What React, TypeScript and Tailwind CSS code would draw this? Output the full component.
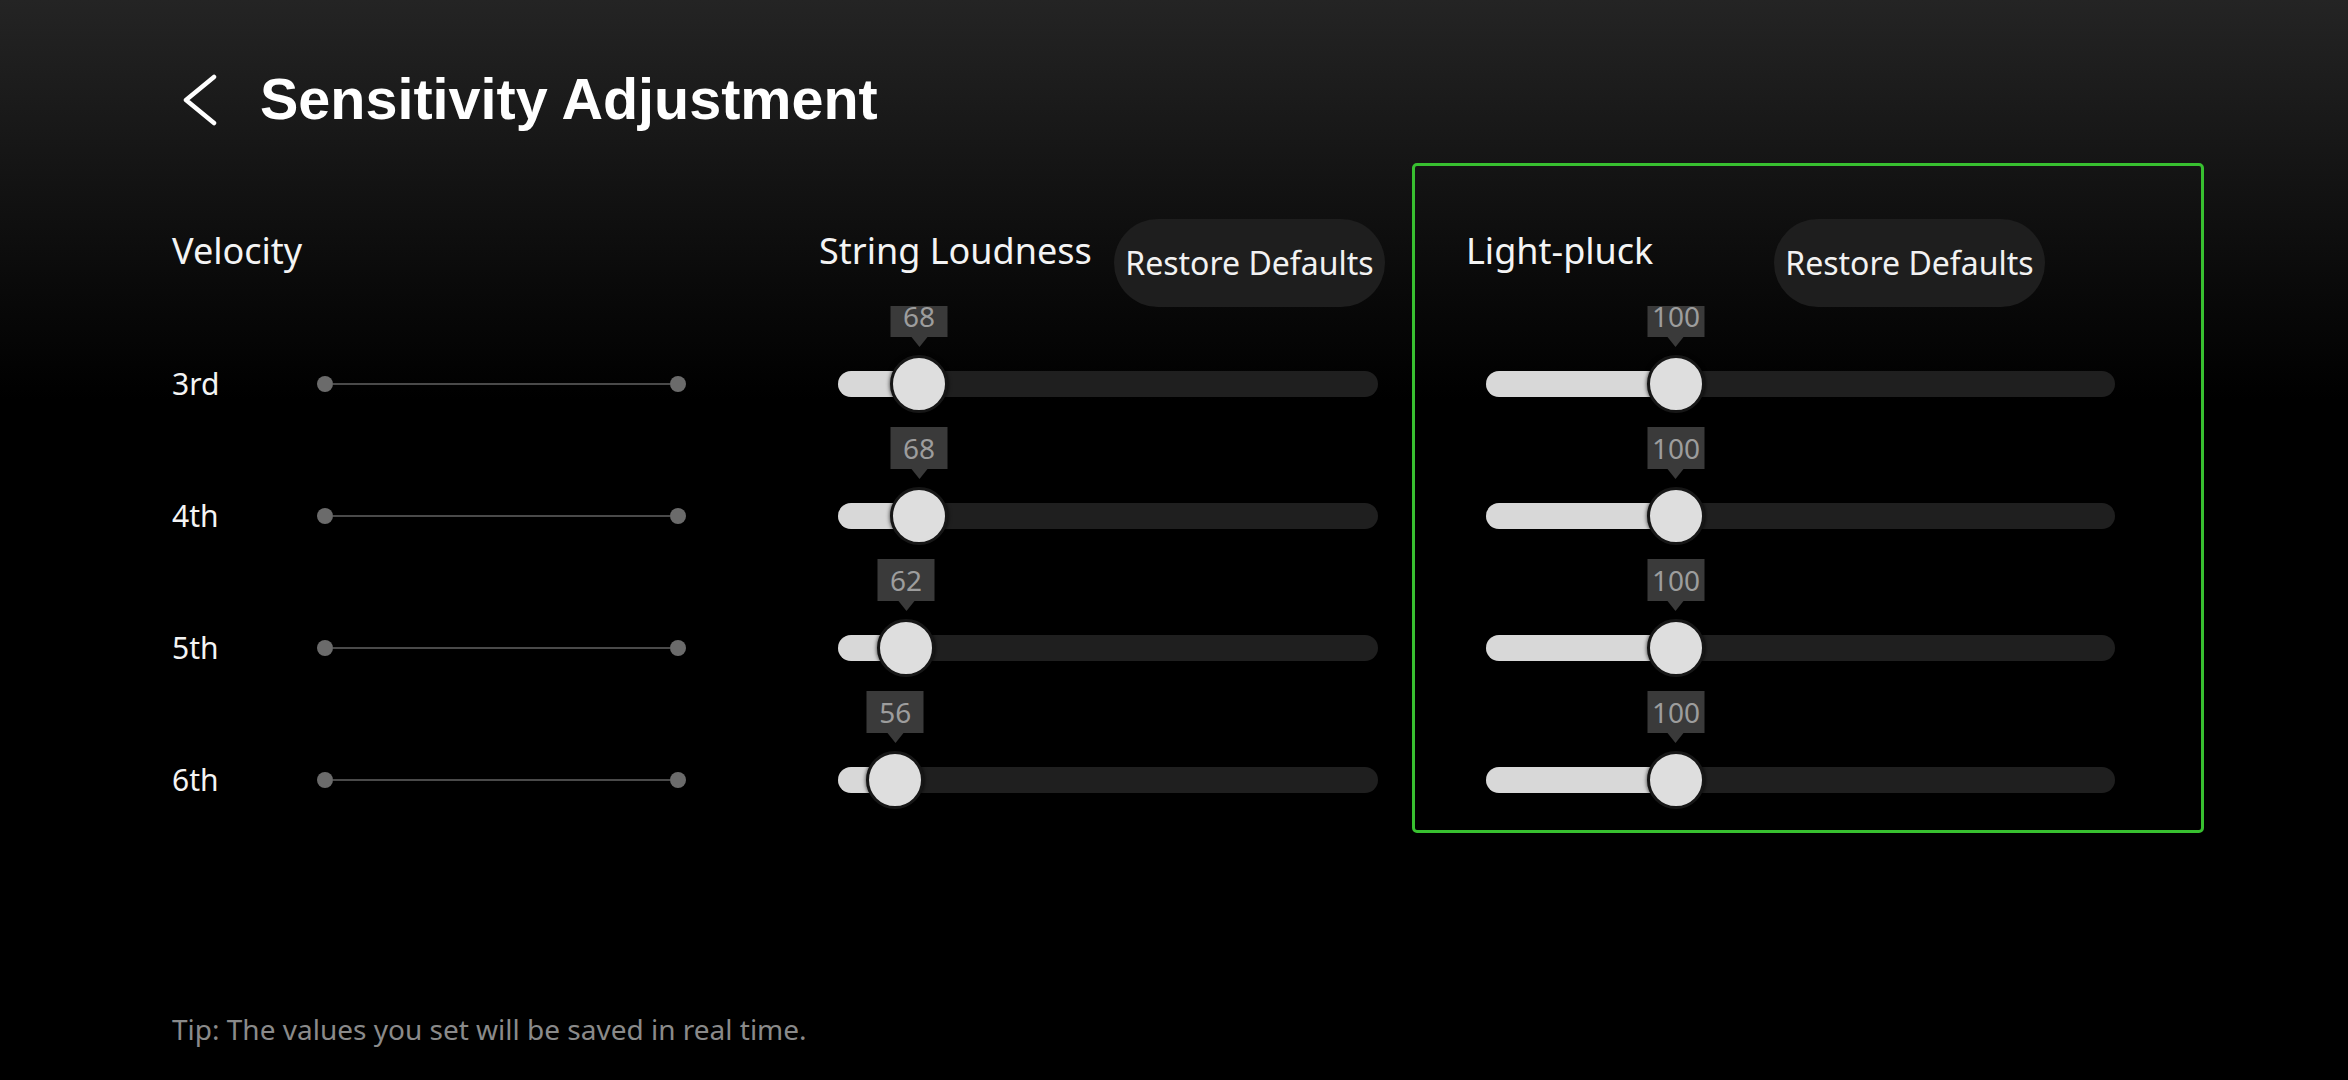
import React from 'react';

type Row = {
  label: string;
  loud: number;
  loudPos: number;
  pluck: number;
  pluckPos: number;
};

const rows: Row[] = [
  { label: '3rd', loud: 68, loudPos: 15, pluck: 100, pluckPos: 30.2 },
  { label: '4th', loud: 68, loudPos: 15, pluck: 100, pluckPos: 30.2 },
  { label: '5th', loud: 62, loudPos: 12.6, pluck: 100, pluckPos: 30.2 },
  { label: '6th', loud: 56, loudPos: 10.6, pluck: 100, pluckPos: 30.2 },
];

const sans = "font-['Noto_Sans',sans-serif]";

// the first row's bubble is cut short by the header, as on the device
const Slider = ({ value, pos, widthClass, cut }: { value: number; pos: number; widthClass: string; cut?: boolean }) => (
  <div className={`relative h-[26px] rounded-full bg-[#1f1f1f] ${widthClass}`}>
    <div className="absolute left-0 top-0 h-full rounded-full bg-[#d8d8d8]" style={{ width: `${pos}%` }} />
    <div
      className="absolute bottom-[50px] flex -translate-x-1/2 flex-col items-center"
      style={{ left: `${pos}%` }}
    >
      <div
        className={`flex w-[57px] items-start justify-center bg-[#3a3a3a] text-[28px] leading-[20px] text-[#9d9d9d] ${cut ? 'h-[31px] pt-0' : 'h-[42px] pt-[11px]'}`}
      >
        {value}
      </div>
      <div className="h-0 w-0 border-x-[8px] border-t-[10px] border-x-transparent border-t-[#3a3a3a]" />
    </div>
    <div
      className="absolute top-1/2 size-[58px] -translate-x-1/2 -translate-y-1/2 rounded-full border-[3px] border-[#161616] bg-[#dedede] shadow-[0_0_4px_rgba(0,0,0,0.8)]"
      style={{ left: `${pos}%` }}
    />
  </div>
);

const RestoreButton = () => (
  <button className="flex h-[88px] w-[271px] shrink-0 items-center justify-center rounded-full bg-[#1e1e1e] text-[32px] leading-none text-[#f2f2f2]">
    Restore Defaults
  </button>
);

const App = () => {
  return (
    <div
      className={`h-[1080px] w-full overflow-hidden bg-[linear-gradient(180deg,#242424_0px,#0a0a0a_280px,#000_400px)] pl-[172px] pt-[71px] text-white ${sans}`}
    >
      {/* header */}
      <div className="flex h-[58px] items-center pl-[10px]">
        <svg width="36" height="52" viewBox="0 0 36 52" fill="none">
          <polyline points="32,3 4,26 32,49" stroke="#fff" strokeWidth="4.5" strokeLinecap="round" strokeLinejoin="round" />
        </svg>
        <h1 className="ml-[42px] font-['Liberation_Sans',Arial,sans-serif] text-[57.5px] font-bold leading-none">
          Sensitivity Adjustment
        </h1>
      </div>

      <div className="mt-[34px] flex items-start">
        {/* velocity */}
        <div className="flex w-[647px] shrink-0 flex-col pt-[56px]">
          <div className="h-[86px]">
            <div className="mt-[14px] text-[36px] leading-none text-[#f4f4f4]">Velocity</div>
          </div>
          <div className="flex flex-col gap-[52px] pt-[39px]">
            {rows.map((r) => (
              <div key={r.label} className="flex h-[80px] items-center">
                <div className="w-[145px] text-[30px] leading-none text-[#f4f4f4]">{r.label}</div>
                <div className="flex w-[369px] items-center">
                  <div className="size-[16px] rounded-full bg-[#6b6b6b]" />
                  <div className="h-[2px] flex-1 bg-[#4a4a4a]" />
                  <div className="size-[16px] rounded-full bg-[#6b6b6b]" />
                </div>
              </div>
            ))}
          </div>
        </div>

        {/* string loudness */}
        <div className="flex w-[593px] shrink-0 flex-col pt-[56px]">
          <div className="flex h-[86px] items-start">
            <div className="mt-[14px] w-[295px] shrink-0 text-[36px] leading-none text-[#f4f4f4]">String Loudness</div>
            <RestoreButton />
          </div>
          <div className="flex flex-col gap-[52px] pt-[39px]">
            {rows.map((r, i) => (
              <div key={r.label} className="flex h-[80px] items-center pl-[19px]">
                <Slider value={r.loud} pos={r.loudPos} widthClass="w-[540px]" cut={i === 0} />
              </div>
            ))}
          </div>
        </div>

        {/* light-pluck */}
        <div className="flex w-[792px] shrink-0 flex-col rounded-[5px] border-[3px] border-[#38c030] pb-[10px] pl-[51px] pt-[53px]">
          <div className="flex h-[86px] items-start">
            <div className="mt-[14px] w-[308px] shrink-0 text-[36px] leading-none text-[#f4f4f4]">Light-pluck</div>
            <RestoreButton />
          </div>
          <div className="flex flex-col gap-[52px] pt-[39px]">
            {rows.map((r, i) => (
              <div key={r.label} className="flex h-[80px] items-center pl-[20px]">
                <Slider value={r.pluck} pos={r.pluckPos} widthClass="w-[629px]" cut={i === 0} />
              </div>
            ))}
          </div>
        </div>
      </div>

      <p className="mt-[182px] text-[28px] leading-none text-[#8a8a8a]">
        Tip: The values you set will be saved in real time.
      </p>
    </div>
  );
};

export default App;
